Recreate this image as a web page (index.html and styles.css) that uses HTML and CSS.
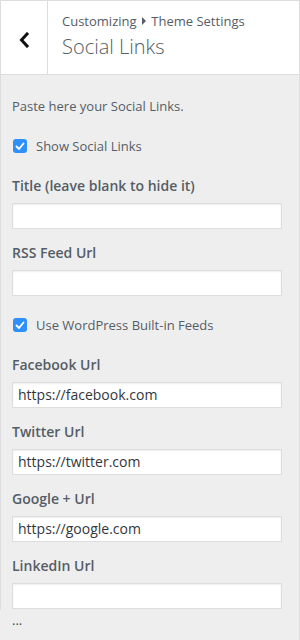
FILE: index.html
```html
<!DOCTYPE html>
<html>
<head>
<meta charset="utf-8">
<link rel="stylesheet" href="styles.css">
</head>
<body>
<div class="page">
  <div class="section">
    <header class="head">
      <div class="back">
        <svg width="12" height="16" viewBox="0 0 12 16"><path d="M9 2 L3.5 8 L9 14" fill="none" stroke="#111" stroke-width="3" stroke-linecap="square"/></svg>
      </div>
      <div class="titles">
        <div class="crumbs">Customizing <span class="tri"></span> Theme Settings</div>
        <div class="title">Social Links</div>
      </div>
    </header>
    <div class="content">
      <p class="desc">Paste here your Social Links.</p>
      <label class="check"><span class="box"><svg width="10" height="9" viewBox="0 0 10 9"><path d="M1.5 4.5 L4 7 L8.5 1.5" fill="none" stroke="#fff" stroke-width="1.8" stroke-linecap="round" stroke-linejoin="round"/></svg></span>Show Social Links</label>
      <div class="field"><div class="label">Title (leave blank to hide it)</div><div class="input"></div></div>
      <div class="field"><div class="label">RSS Feed Url</div><div class="input"></div></div>
      <label class="check check2"><span class="box"><svg width="10" height="9" viewBox="0 0 10 9"><path d="M1.5 4.5 L4 7 L8.5 1.5" fill="none" stroke="#fff" stroke-width="1.8" stroke-linecap="round" stroke-linejoin="round"/></svg></span>Use WordPress Built-in Feeds</label>
      <div class="field first"><div class="label">Facebook Url</div><div class="input">https://facebook.com</div></div>
      <div class="field"><div class="label">Twitter Url</div><div class="input">https://twitter.com</div></div>
      <div class="field"><div class="label">Google + Url</div><div class="input">https://google.com</div></div>
      <div class="field"><div class="label">LinkedIn Url</div><div class="input"></div></div>
    </div>
  </div>
  <div class="more">...</div>
</div>
</body>
</html>
```
FILE: styles.css
```css
html, body { margin: 0; padding: 0; background: #eee; }
body { font-family: "Open Sans", "Noto Sans", sans-serif; color: #555d66; }
.page { width: 300px; height: 640px; box-sizing: border-box; border-right: 1px solid #ddd; border-top: 1px solid #ddd; }
.section { border-left: 1px solid #ddd; padding-bottom: 1px; }
.head { display: flex; height: 73px; background: #fff; border-bottom: 1px solid #ddd; }
.back { width: 47px; border-right: 1px solid #ddd; display: flex; align-items: center; justify-content: center; padding-top: 4px; box-sizing: border-box; }
.titles { padding-left: 14px; display: flex; flex-direction: column; justify-content: center; padding-bottom: 2px; }
.crumbs { font-size: 13px; line-height: 18px; display: flex; align-items: center; gap: 0; white-space: pre; }
.tri { display: inline-block; width: 0; height: 0; border-top: 4px solid transparent; border-bottom: 4px solid transparent; border-left: 4px solid #555d66; margin: 0 2px 0 2px; }
.title { font-size: 20px; font-weight: 300; line-height: 28px; margin-top: 3px; }
.content { padding: 21px 0 0 11px; }
.desc { margin: 0; font-size: 13px; line-height: 20px; }
.check { display: flex; align-items: center; gap: 9px; font-size: 13px; line-height: 20px; margin-top: 20px; color: #555d66; }
.check2 { margin-top: 19px; }
.box { width: 14px; height: 14px; border-radius: 3px; background: #2f8ffb; display: flex; align-items: center; justify-content: center; flex: none; margin-left: 1px; }
.field { margin-top: 14px; }
.check + .field { margin-top: 20px; }
.label { font-size: 14px; font-weight: 600; line-height: 20px; margin-bottom: 7px; color: #555d66; }
.input { width: 270px; height: 26px; box-sizing: border-box; background: #fff; border: 1px solid #ddd; box-shadow: inset 0 1px 2px rgba(0,0,0,0.07); font-size: 14px; line-height: 24px; padding-left: 5px; color: #32373c; }
.more { font-size: 13px; line-height: 16px; padding-left: 12px; margin-top: 2px; color: #444; }
```
